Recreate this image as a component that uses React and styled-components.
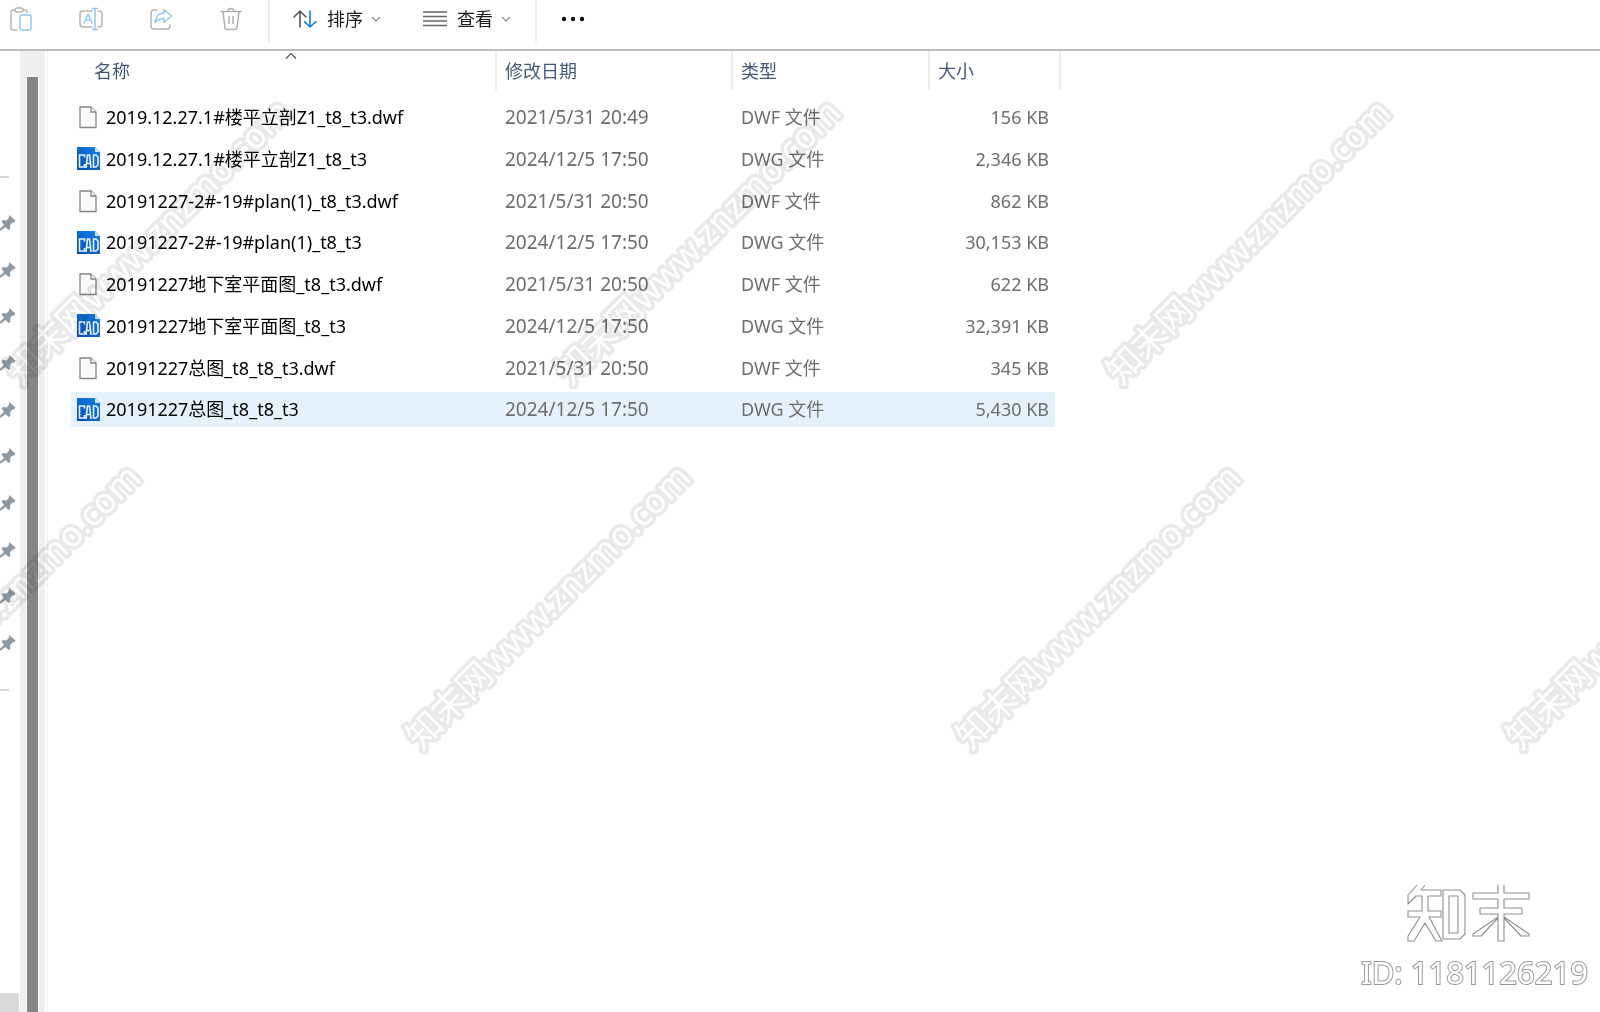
import React from 'react';
import styled, { createGlobalStyle } from 'styled-components';

const latin = '"Noto Sans", "Open Sans", "Noto Sans CJK SC", sans-serif';

const GlobalStyle = createGlobalStyle`
  * { box-sizing: border-box; }
  body { margin: 0; background: #fff; font-family: ${latin}; color: #000; }
  button { font: inherit; color: inherit; background: none; border: 0; padding: 0; }
`;

const Window = styled.div`
  position: relative;
  display: flex;
  flex-direction: column;
  height: 100vh;
  overflow: hidden;
  background: #fff;
`;

const Toolbar = styled.header`
  display: flex;
  align-items: flex-start;
  flex: none;
  height: 51px;
  border-bottom: 2px solid #bdbdbd;
`;

const ToolGroup = styled.div`
  display: flex;
  align-items: center;
  height: 42px;
  gap: 42px;
  padding: ${(p) => p.$pad};
  border-right: ${(p) => (p.$last ? '0' : '2px solid #ececec')};
`;

const IconButton = styled.button`
  display: flex;
  align-items: center;
  justify-content: center;
  width: 28px;
  height: 28px;
  margin-bottom: 4px;
`;

const MenuButton = styled.button`
  display: flex;
  align-items: center;
  gap: 8px;
  height: 28px;
  margin-bottom: 4px;
  font-size: 18px;
  line-height: 28px;
  color: #1c1c1c;

  span { margin-left: 2px; }
`;

const Body = styled.div`
  display: flex;
  flex: 1;
  min-height: 0;
`;

const Sidebar = styled.nav`
  display: flex;
  flex-direction: column;
  justify-content: space-between;
  width: 20px;
  padding-top: 125px;
`;

const PinList = styled.ul`
  margin: 0;
  padding: 21px 0 23px;
  width: 9px;
  list-style: none;
  border-top: 2px solid #d4d4d4;
  border-bottom: 2px solid #d4d4d4;
`;

const PinItem = styled.li`
  display: flex;
  height: 47px;
  align-items: center;

  &:nth-child(3n) { height: 46px; }

  svg { flex: none; }
`;

const SideCorner = styled.div`
  height: 19px;
  width: 19px;
  background: #d9d9d9;
  border-top-right-radius: 2px;
`;

const ScrollTrack = styled.div`
  display: flex;
  width: 25px;
  padding: 26px 7px 0;
  background: #efefef;
`;

const ScrollThumb = styled.div`
  flex: 1;
  background: #858585;
  outline: 1px solid #fafafa;
`;

const Content = styled.main`
  flex: 1;
  margin-left: 2px;
  border-left: 1px solid #f2f2f2;
  padding-left: 23px;
`;

const FileTable = styled.table`
  border-collapse: separate;
  border-spacing: 0;
  table-layout: fixed;
  width: 990px;
`;

const HeadCell = styled.th`
  padding: 0 0 6px;
  text-align: left;
  font-size: 18px;
  font-weight: 400;
  color: #44597a;
`;

const HeadFill = styled.div`
  position: relative;
  height: 39px;
  padding-left: ${(p) => (p.$first ? 23 : 8)}px;
  border-right: 2px solid #ebebeb;
  line-height: 41px;
`;

const SortMark = styled.svg`
  position: absolute;
  top: 1px;
  left: calc(50% + 2px);
`;

const Row = styled.tr`
  height: 42px;

  &:nth-child(4n) { height: 41px; }
`;

const Cell = styled.td`
  padding: 3px 0;
  line-height: 35px;
  white-space: nowrap;
`;

const CellFill = styled.div`
  display: flex;
  align-items: center;
  gap: 5px;
  height: 35px;
  padding-left: ${(p) => (p.$name ? 6 : 8)}px;
  padding-right: ${(p) => (p.$right ? 6 : 0)}px;
  margin-right: ${(p) => (p.$right ? 6 : 0)}px;
  justify-content: ${(p) => (p.$right ? 'flex-end' : 'flex-start')};
  font-size: ${(p) => (p.$date ? 19 : 18)}px;
  color: ${(p) => (p.$name ? '#000' : '#6d6d6d')};
  background: ${(p) => (p.$on ? '#e5f2fe' : 'transparent')};
`;

const Marks = styled.svg`
  position: absolute;
  inset: 0;
  width: 100%;
  height: 100%;
  pointer-events: none;
  mix-blend-mode: multiply;

  text {
    font-family: "Noto Sans", "Noto Sans CJK SC", sans-serif;
    font-size: 35px;
    fill: #fff;
    stroke: #e9e9e9;
    stroke-width: 7px;
    stroke-linejoin: round;
    paint-order: stroke fill;
  }
`;

const Brand = styled.div`
  position: absolute;
  right: 12px;
  bottom: 20px;
  display: flex;
  flex-direction: column;
  align-items: center;

  svg { margin-right: 12px; }
`;

const BrandId = styled.div`
  font-size: 31px;
  line-height: 40px;
  margin-top: 8px;
  color: #fff;
  -webkit-text-stroke: 2px #999;
  paint-order: stroke fill;
`;

const Paste = () => (
  <svg width="24" height="26" viewBox="0 0 24 26" fill="none" strokeWidth="1.5" strokeLinejoin="round">
    <path d="M8 24H4a2 2 0 0 1-2-2V6a2 2 0 0 1 2-2h2M14 4h2a2 2 0 0 1 2 2v1" stroke="#b5b5b5" />
    <rect x="6" y="2" width="8" height="4" rx="2" stroke="#b5b5b5" />
    <rect x="11" y="9" width="11" height="15" rx="1.5" stroke="#92c8ef" />
  </svg>
);

const Rename = () => (
  <svg width="26" height="26" viewBox="0 0 26 26" fill="none" strokeWidth="1.5" strokeLinecap="round" strokeLinejoin="round">
    <path d="M14 21H5a3 3 0 0 1-3-3V8a3 3 0 0 1 3-3h9M20 5h1a3 3 0 0 1 3 3v10a3 3 0 0 1-3 3h-1" stroke="#b5b5b5" />
    <path d="M6 17l4-9 4 9M7.5 14h5M17 2.5v21M14.5 2.5h5M14.5 23.5h5" stroke="#92c8ef" />
  </svg>
);

const Share = () => (
  <svg width="26" height="26" viewBox="0 0 26 26" fill="none" strokeWidth="1.5" strokeLinecap="round" strokeLinejoin="round">
    <path d="M9 4H6a3 3 0 0 0-3 3v13a3 3 0 0 0 3 3h13a3 3 0 0 0 3-3v-1" stroke="#b5b5b5" />
    <path d="M16 3.5l7.5 6.5-7.5 6.5v-4c-4.5 0-7 1.5-9 4 .5-5.5 4-9 9-9.5z" stroke="#92c8ef" />
  </svg>
);

const Trash = () => (
  <svg width="24" height="26" viewBox="0 0 24 26" fill="none" stroke="#b0b0b0" strokeWidth="1.5" strokeLinecap="round" strokeLinejoin="round">
    <path d="M2 5.5h20M9 5.5a3 3 0 0 1 6 0M4 5.5l2 16.5a2 2 0 0 0 2 1.5h8a2 2 0 0 0 2-1.5l2-16.5M10 10.5v7M14 10.5v7" />
  </svg>
);

const SortIcon = () => (
  <svg width="24" height="20" viewBox="0 0 24 20" fill="none" strokeWidth="1.6" strokeLinecap="round" strokeLinejoin="round">
    <path d="M7 18V2M1 8l6-6 6 6" stroke="#555" />
    <path d="M17 2v16M11.5 12.5L17 18l6-5.5" stroke="#0f7fd8" />
  </svg>
);

const ViewIcon = () => (
  <svg width="24" height="18" viewBox="0 0 24 18" stroke="#666" strokeWidth="1.5">
    <path d="M0 2h24M0 6.500h24M0 11h24M0 15.500h24" />
  </svg>
);

const Chevron = () => (
  <svg width="10" height="6" viewBox="0 0 10 6" fill="none" stroke="#8a8a8a" strokeWidth="1.2">
    <path d="M1 1l4 4 4-4" />
  </svg>
);

const Dots = () => (
  <svg width="24" height="6" viewBox="0 0 24 6" fill="#111">
    <circle cx="3" cy="3" r="2.2" /><circle cx="12" cy="3" r="2.2" /><circle cx="21" cy="3" r="2.2" />
  </svg>
);

const Pin = () => (
  <svg width="16" height="18" viewBox="0 0 16 18" fill="#8e9aa3">
    <path d="M9 1l6.5 5.500-1.500 2-2 .2-2 2.800.3 3.500-1.800 1-3-3L1 16.500H0v-2l4-3.500-2.500-3.500L3 6l3.500.5 2.300-2.500z" />
  </svg>
);

const FileIcon = () => (
  <svg width="24" height="24" viewBox="0 0 24 24" fill="#fafafa" stroke="#858585" strokeWidth="1.3">
    <path d="M3 2h11l5 5v15.500H3z" />
    <path d="M14 2v5h5" fill="#fff" />
  </svg>
);

const CadIcon = () => (
  <svg width="24" height="24" viewBox="0 0 24 24">
    <defs>
      <linearGradient id="cad" x1="0" y1="1" x2="1" y2="0">
        <stop offset="0" stopColor="#0a4fa8" />
        <stop offset="1" stopColor="#1181f0" />
      </linearGradient>
    </defs>
    <path d="M0 0h18l5 5v18H0z" fill="url(#cad)" />
    <path d="M18 0l5 5h-5z" fill="#cfe5fb" />
    <g fill="none" stroke="#e8f2fd" strokeWidth="1.6">
      <path d="M7.5 10.500V8H2.500v12h5v-3M9 21l1.500-13h2L14 21M9.800 16.500h3.500M16.500 8v12h2.500l2-2v-8l-2-2z" />
    </g>
  </svg>
);

const BrandLogo = () => (
  <svg width="124" height="60" viewBox="0 0 124 60" fill="#fff" stroke="#8f8f8f" strokeWidth="1.1" strokeLinejoin="round">
    <path d="M10 1L1 11v9l8-8h6v15H1v6h12L1 52v5h6l11-18 11 18h6L22 33h12v-6H21V12h13V6H14l4-5" />
    <path d="M36 6h17l5 5v39l-5 5H36zM42 12v37h9V12z" fillRule="evenodd" />
    <path d="M91 1v8H66v6h25v9H73v6h18v3L66 50v2h8l17-18v23h6V34l17 18h8v-2L97 33v-3h18v-6H97v-9h25V9H97V1" />
  </svg>
);

const files = [
  ['2019.12.27.1#楼平立剖Z1_t8_t3.dwf', '2021/5/31 20:49', 'DWF 文件', '156 KB'],
  ['2019.12.27.1#楼平立剖Z1_t8_t3', '2024/12/5 17:50', 'DWG 文件', '2,346 KB'],
  ['20191227-2#-19#plan(1)_t8_t3.dwf', '2021/5/31 20:50', 'DWF 文件', '862 KB'],
  ['20191227-2#-19#plan(1)_t8_t3', '2024/12/5 17:50', 'DWG 文件', '30,153 KB'],
  ['20191227地下室平面图_t8_t3.dwf', '2021/5/31 20:50', 'DWF 文件', '622 KB'],
  ['20191227地下室平面图_t8_t3', '2024/12/5 17:50', 'DWG 文件', '32,391 KB'],
  ['20191227总图_t8_t8_t3.dwf', '2021/5/31 20:50', 'DWF 文件', '345 KB'],
  ['20191227总图_t8_t8_t3', '2024/12/5 17:50', 'DWG 文件', '5,430 KB'],
];

const marks = [
  [21, 386], [571, 386], [1121, 386],
  [-129, 751], [421, 751], [971, 751], [1521, 751],
];

export default function App() {
  return (
    <Window>
      <GlobalStyle />
      <Toolbar>
        <ToolGroup $pad="0 23px 0 7px">
          <IconButton aria-label="粘贴"><Paste /></IconButton>
          <IconButton aria-label="重命名"><Rename /></IconButton>
          <IconButton aria-label="共享"><Share /></IconButton>
          <IconButton aria-label="删除"><Trash /></IconButton>
        </ToolGroup>
        <ToolGroup $pad="0 24px 0 23px">
          <MenuButton><SortIcon /><span>排序</span><Chevron /></MenuButton>
          <MenuButton><ViewIcon /><span>查看</span><Chevron /></MenuButton>
        </ToolGroup>
        <ToolGroup $pad="0 0 0 22px" $last>
          <IconButton aria-label="更多"><Dots /></IconButton>
        </ToolGroup>
      </Toolbar>
      <Body>
        <Sidebar>
          <PinList>
            {Array.from({ length: 10 }, (_, i) => <PinItem key={i}><Pin /></PinItem>)}
          </PinList>
          <SideCorner />
        </Sidebar>
        <ScrollTrack><ScrollThumb /></ScrollTrack>
        <Content>
          <FileTable>
            <colgroup>
              <col width="426" />
              <col width="236" />
              <col width="197" />
              <col />
            </colgroup>
            <thead>
              <tr>
                <HeadCell>
                  <HeadFill $first>
                    名称
                    <SortMark width="12" height="8" viewBox="0 0 12 8" fill="none" stroke="#555" strokeWidth="1.2">
                      <path d="M1 6.500l5-5 5 5" />
                    </SortMark>
                  </HeadFill>
                </HeadCell>
                <HeadCell><HeadFill>修改日期</HeadFill></HeadCell>
                <HeadCell><HeadFill>类型</HeadFill></HeadCell>
                <HeadCell><HeadFill>大小</HeadFill></HeadCell>
              </tr>
            </thead>
            <tbody>
              {files.map(([name, date, type, size], i) => {
                const on = i === files.length - 1;
                return (
                  <Row key={name}>
                    <Cell>
                      <CellFill $name $on={on}>
                        {type.startsWith('DWG') ? <CadIcon /> : <FileIcon />}
                        {name}
                      </CellFill>
                    </Cell>
                    <Cell><CellFill $date $on={on}>{date}</CellFill></Cell>
                    <Cell><CellFill $on={on}>{type}</CellFill></Cell>
                    <Cell><CellFill $right $on={on}>{size}</CellFill></Cell>
                  </Row>
                );
              })}
            </tbody>
          </FileTable>
        </Content>
      </Body>
      <Marks aria-hidden="true">
        {marks.map(([x, y]) => (
          <text key={`${x}-${y}`} transform={`translate(${x} ${y}) rotate(-45)`}>知末网www.znzmo.com</text>
        ))}
      </Marks>
      <Brand>
        <BrandLogo />
        <BrandId>ID: 1181126219</BrandId>
      </Brand>
    </Window>
  );
}
